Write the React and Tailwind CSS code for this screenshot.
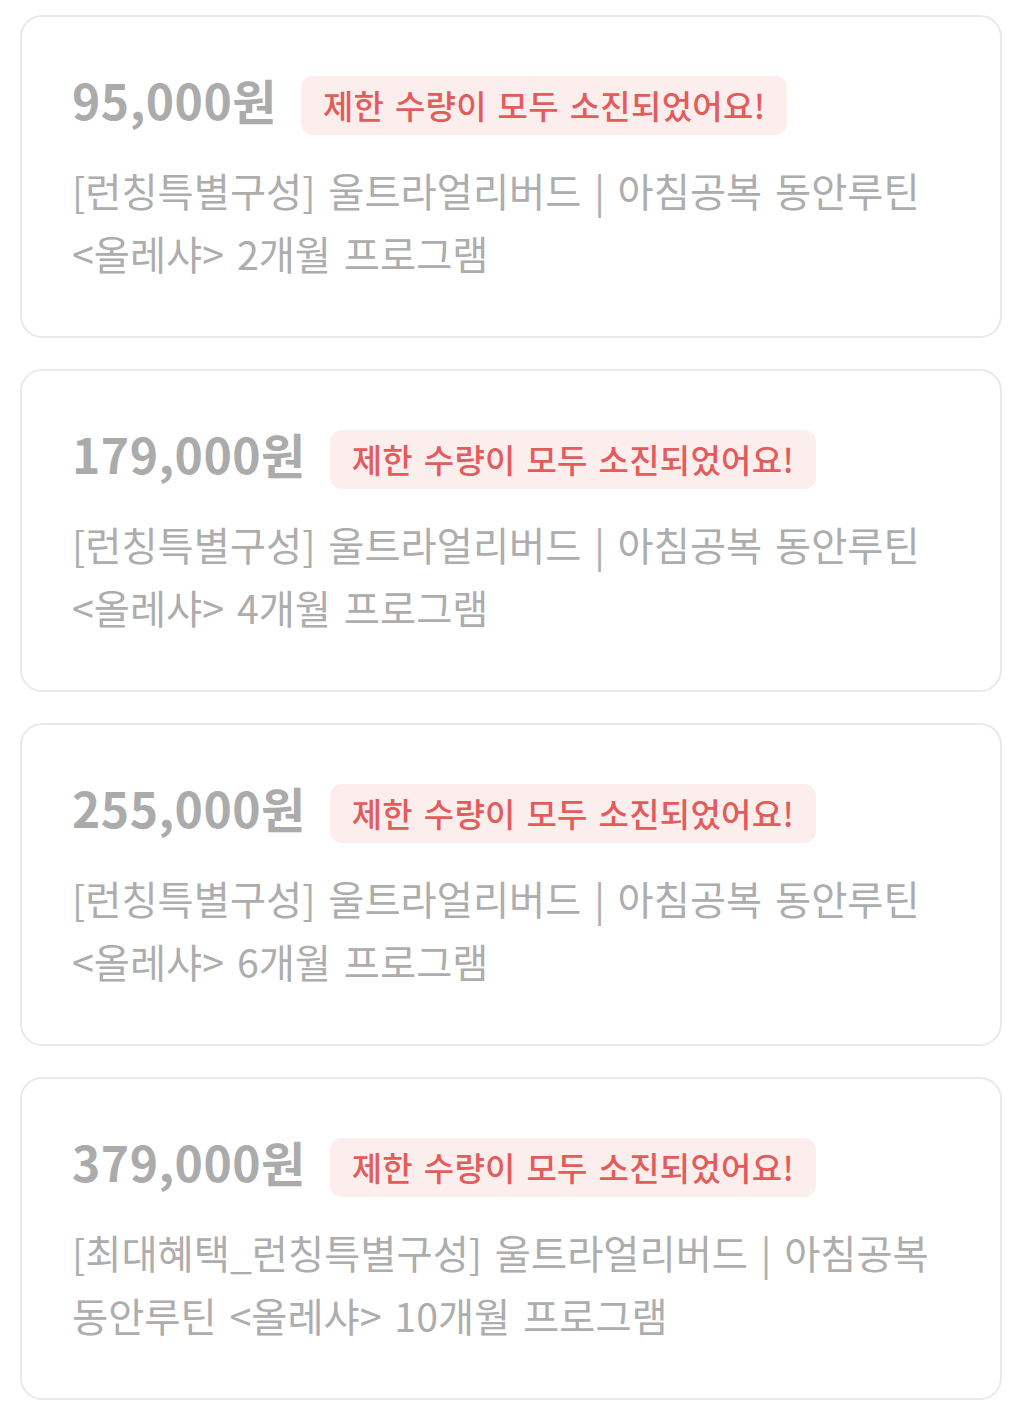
const products = [
  { price: '95,000원', head: '[런칭특별구성] 울트라얼리버드 | 아침공복 동안루틴', months: '2개월' },
  { price: '179,000원', head: '[런칭특별구성] 울트라얼리버드 | 아침공복 동안루틴', months: '4개월' },
  { price: '255,000원', head: '[런칭특별구성] 울트라얼리버드 | 아침공복 동안루틴', months: '6개월' },
  { price: '379,000원', head: '[최대혜택_런칭특별구성] 울트라얼리버드 | 아침공복 동안루틴', months: '10개월' },
];

function ProductCard({ price, head, months }) {
  return (
    <div className="rounded-[22px] border-2 border-[#e9e9e9] bg-white pl-[50px] pr-[50px] pt-[59px] pb-[52px]">
      <div className="flex items-center">
        <span className="mb-[14px] text-[48px] font-bold leading-[44px] tracking-[0.5px] text-[#ababab]">{price}</span>
        <span className="ml-[24px] rounded-[12px] bg-[#fdeeee] px-[22px] py-[8px] text-[33px] font-medium leading-[43px] tracking-[0.3px] [word-spacing:3px] text-[#e25c5c]">
          제한 수량이 모두 소진되었어요!
        </span>
      </div>
      <p className="mt-[23px] break-keep text-[39.3px] leading-[63px] [word-spacing:4px] text-[#adadad]">
        {head} <span className="whitespace-nowrap">{'<올레샤>'}</span> {months} 프로그램
      </p>
    </div>
  );
}

export default function App() {
  return (
    <div
      className="min-h-screen bg-white pl-[20px] pr-[25px] pt-[15px] pb-[20px]"
      style={{ fontFamily: '"Noto Sans CJK KR", "Noto Sans", sans-serif' }}
    >
      <div className="flex flex-col gap-[31px]">
        {products.map((p) => (
          <ProductCard key={p.price} {...p} />
        ))}
      </div>
    </div>
  );
}
